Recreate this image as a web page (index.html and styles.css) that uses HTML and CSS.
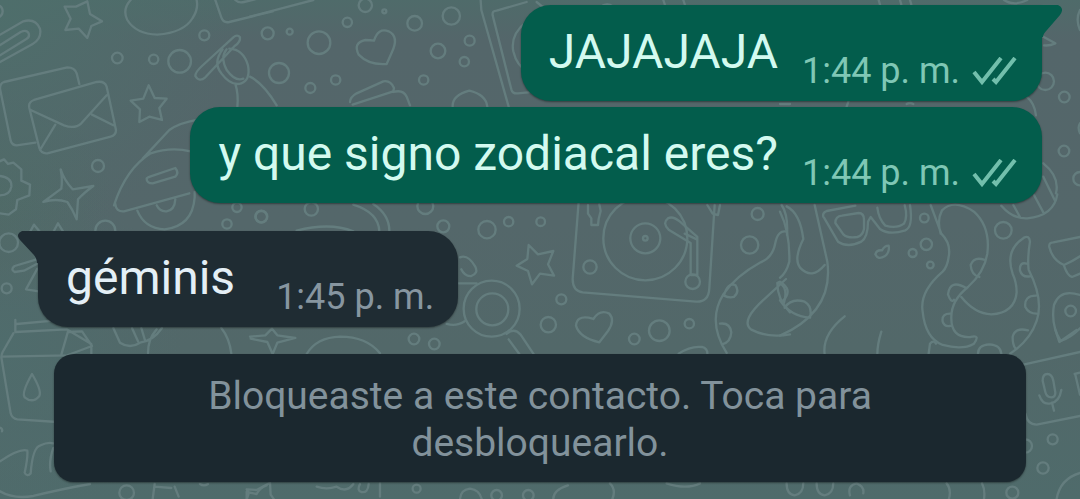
FILE: index.html
```
<!DOCTYPE html>
<html lang="es">
<head>
<meta charset="utf-8">
<meta name="viewport" content="width=device-width, initial-scale=1">
<title>Chat</title>
<link rel="stylesheet" href="styles.css">
</head>
<body>
<svg class="wallpaper" viewBox="0 0 1080 499" preserveAspectRatio="xMidYMid slice" aria-hidden="true">
  <!-- top left: clip, envelopes, stars, gear, rocket -->
  <g transform="scale(.3333)">
    <path d="M0 18a20 20 0 0 1 0 32M-10 110L70 64q36-10 50 22q6 30-22 46L0 186M-10 142L62 96q18-8 24 4q4 12-8 18L0 166"/>
    <path d="M262 4l8 38 36 22-32 14-12 36-26-28-40 4 16-34-18-36 34 0z"/>
    <path d="M392 0q-26 28-10 60q26 42 90 44q80-6 106-50q18-28 12-54M646 0l18 52q6 18 24 14l130-32M706 0q10 10 26 6l80-20"/>
    <circle cx="613" cy="106" r="15"/><circle cx="352" cy="174" r="16"/><circle cx="461" cy="178" r="14"/><circle cx="539" cy="184" r="34"/>
    <path d="M586 228q0-12 20-30L700 112q12-10 20 0q2 14-16 26L616 232q-18 16-30-4zM668 148q-30 40-4 72q30 40 60 30q28-10 20-54q-14-48-56-50M680 148q-20 24 0 62q26 36 50 26M706 252q10 30 6 70"/>
    <path d="M106 428l-56 8q-14 0-18-14L0 266q0-16 12-20l190-44q22 0 28 18l8 32M88 324q-4-18 14-24l188-54q24-4 30 14l28 130q0 16-16 20l-190 50q-18 2-24-16zM92 330l100 46q32 12 52-6l76-84M166 374l-46 76M276 344l64 32"/>
    <path d="M446 256l18 38 36 2-22 28 8 36-38-10-30 16 2-38-28-26 38-6z"/>
    <circle cx="294" cy="498" r="18"/>
    <path d="M182 508q10 32 36 60l62-10q-30 22-46 40l-4 60q-12-30-28-52q-34-12-72 0l54-40q4-26-2-58z"/>
    <path d="M0 640l26 4 22-16 4-28 36-14 2-32-26-12 0-34-24-20-16 4-12-14-22 10"/>
    <path d="M0 528q36 4 34 32q-4 26-34 26"/>
    <path d="M428 476l80-86q30-22 90-32M342 616q36-110 110-156q60-20 120-6M346 612q2 24 26 22l196-54M440 536q0 14 18 14l68-20q12-12 0-26l-76 26q-10 4-10 6M412 632q22 54 82 56q84-10 90-96v-16M470 616q10 20 30 18q24-4 26-36"/>
    <circle cx="784" cy="650" r="18"/><circle cx="681" cy="672" r="14"/><circle cx="711" cy="622" r="14"/><circle cx="316" cy="692" r="30"/>
    <path d="M90 696l12-22 18 22M160 696l14-26 16 26"/>
  </g>
  <!-- top centre: heart and bubbles -->
  <g transform="translate(250 0) scale(.3333)">
    <path d="M0 50L190 0M0 230q40 20 80 86"/>
    <circle cx="346" cy="16" r="20"/><circle cx="403" cy="34" r="6"/><circle cx="292" cy="67" r="14"/><circle cx="53" cy="100" r="18"/><circle cx="119" cy="95" r="9"/><circle cx="207" cy="128" r="34"/><circle cx="87" cy="219" r="30"/><circle cx="181" cy="264" r="15"/><circle cx="257" cy="240" r="14"/><circle cx="494" cy="70" r="22"/><circle cx="604" cy="48" r="26"/><circle cx="659" cy="122" r="15"/><circle cx="564" cy="153" r="22"/><circle cx="643" cy="185" r="14"/><circle cx="521" cy="240" r="14"/>
    <path d="M372 122q12-40 44-28q32 16 10 62l-16 36q-54 4-84-28q-18-36 20-44q16 0 26 2z"/>
    <path d="M300 306q0-14 20-26l80-36q22-4 32 20l-2 10-122 40M430 276q30-8 40 14l10 26M608 320q-2-34 50-48q50 12 54 48M692 0l2 30 82 290M830 6l-90 26q-14 0-12 14l56 222q4 14 20 12l60-6M830 64q-50 40-40 90q10 44 44 62"/>
    <path d="M860 6l20 16M1050 22q20-16 40-2M1240 0l6 18M1300 0l6 18"/>
  </g>
  <!-- right edge -->
  <g transform="translate(780 0) scale(.3333)">
    <path d="M296 0l4 14M360 0l4 14M390 0l4 14M672 0q30 20 70 0M790 110l36 20q-18 8-34 6M900 30q-14 28 0 60"/>
    <circle cx="796" cy="244" r="26"/><circle cx="853" cy="291" r="16"/><circle cx="852" cy="453" r="16"/><circle cx="900" cy="536" r="20"/>
    <path d="M740 290q24 20 28 56M790 490q50 40 38 90M790 530l34 70M900 370q-8 12 0 30M0 312h30M200 320l6-18M380 312q10-6 20 0"/>
  </g>
  <!-- middle strip, left half -->
  <g transform="translate(0 200) scale(.3333)">
    <circle cx="26" cy="128" r="28"/><circle cx="20" cy="265" r="15"/>
    <path d="M110 178L44 198q-14 10 0 18l28-4 38-20M112 206l-34 62 38 6"/>
  </g>
  <g transform="translate(250 200) scale(.3333)">
    <circle cx="34" cy="50" r="17"/><circle cx="184" cy="27" r="20"/><circle cx="526" cy="18" r="24"/><circle cx="580" cy="79" r="18"/><circle cx="711" cy="89" r="26"/><circle cx="776" cy="65" r="14"/><circle cx="725" cy="326" r="84"/><circle cx="727" cy="328" r="48"/><circle cx="492" cy="417" r="16"/><circle cx="553" cy="432" r="16"/>
    <path d="M310 14q76 24 78 80M370 12q50 34 48 84M140 92q100-26 170 2M630 172q24-10 46 28q10 20-12 28q-20 2-30-20M626 250h54M590 372q30 8 54-8M770 402q22-20 42 2l40 60M776 418l32 44"/>
    <path d="M0 410l46-4 20-20 16 20 54 8-54 14-14 34-16-36-50-10M170 462q30-50 100-52q80 0 120 50"/>
  </g>
  <!-- record player, hearts, stars -->
  <g transform="translate(510 195) scale(.3333)">
    <circle cx="92" cy="80" r="13"/><circle cx="240" cy="216" r="20"/><circle cx="154" cy="313" r="15"/><circle cx="115" cy="389" r="23"/><circle cx="448" cy="407" r="31"/><circle cx="373" cy="432" r="16"/><circle cx="538" cy="386" r="14"/><circle cx="743" cy="57" r="18"/><circle cx="719" cy="150" r="26"/>
    <path d="M56 150l28 28 46-10-16 40 18 34-42-6-24 32-12-40-34-16 32-20z"/>
    <path d="M206 20l-18 232q0 36 30 40l340 28q38 2 40-40L614 30M234 30l0 26 10 14 0 20h20l2-18 6-24-4-20M592 30l16 26 16 4 6-30"/>
    <circle cx="406" cy="130" r="126"/><circle cx="406" cy="130" r="45"/><circle cx="406" cy="130" r="7"/><circle cx="548" cy="260" r="22"/>
    <path d="M474 70q14-8 36 10l52 46v114h-20V144l-66-40q-20-20-2-34M524 116l38 18"/>
    <path d="M250 372q20-30 48-16q18 20-4 52l-26 34q-60-14-70-50q2-30 38-24z"/>
    <path d="M506 476q36-24 70-20q18 4 16 24M815 30q20 30 16 90M830 110q-26-6-34 34q-8 44-44 58q-76 42-112 96q-50 80 10 176M642 302q10-40 34-32q14 20-4 36q-14 4-30-4M630 386q30-4 34 26q-2 30-28 36M828 252l-60 56q-80 70-44 96q50 26 116 14M802 264q0 50 38 88M806 262q30 14 16 62"/>
  </g>
  <!-- octopus, glasses, fish -->
  <g transform="translate(780 195) scale(.3333)">
    <path d="M20 34q40 20 50 98q-30 60-10 86q36 38 74-8M104 30q18 80 38 170q20 150-142 222M0 50q30 60 28 150q-10 36-28 48M0 260q40 24 10 56M14 338q20-30 60-18q24 14 16 48q-58-4-90-52"/>
    <path d="M130 66q-4-12 10-18l86-16M132 68l42 72q30 20 70 0q20-14 20-60l8-14 28 36q28 20 76 4q24-10 14-76M166 84q0-20 20-22l50-8q16 0 16 20v28q-4 20-20 24q-30 4-42-8zM292 38q4 34 24 54q34 10 56-6q12-20 2-56"/>
    <path d="M326 152q4 20-12 32q-20 12-28-6q4-14 20-12q8-14 20-14z"/>
    <circle cx="398" cy="174" r="12"/><circle cx="439" cy="148" r="17"/><circle cx="451" cy="210" r="10"/><circle cx="433" cy="69" r="13"/><circle cx="670" cy="106" r="25"/>
    <path d="M452 30l32 86q30 30 22 70q-4 30-18 44q-70 60-60 120q8 80 60 100q60 16 94-4q20-28-10-20q-60 4-58-60q0-50 50-90q50-46 58-100q10-80-40-126q-60-40-96-4q-16 30-4 70M612 194q-30-10-40 16q2 30 26 36M560 280q-50-30-56 18q10 28 18 16M514 356q-30-2-26 24q6 18 26 12"/>
    <path d="M544 306q40 50 90 52q70-4 76-66q0-30-12-56q-24-70 34-108q16-8 18 12q-8 50-4 84q46 90 24 154q-20 60-80 98M740 206q-22-6-20 20q6 22 30 18M768 302q-36 0-32 34q10 20 34 20M744 406q-40-10-46 20q0 24 8 34M594 476q0-26 34-28q34 2 36 28M446 476l4-30q10-12 18 0"/>
    <path d="M134 478q-8-60 60-114M292 478q0-30 12-68M664 32q34 40 78 38q80-8 90-72M700 30l20 36M762 0l30 56M900 126l-80 16q-14 0-12 14q10 40 44 54q24-10 48-26M852 212q10 30 24 34l24-10M900 300q-60-20-78 30q-10 60 20 108q30-10 58-38"/>
    <circle cx="872" cy="348" r="16"/>
  </g>
  <!-- bottom left: milk carton, hand -->
  <g transform="translate(0 320) scale(.3333)">
    <path d="M40 40L8 96q-4 8-4 16l28 168q4 16 20 18l120 8M46 0v36l154-8 74 44v30M204 34l-20 70M6 110l200-4M50 12l110-10M206 36l40-2 30 44-80 30"/>
    <path d="M96 162q30 50 22 66q-20 24-44 4q-10-14 22-70z"/>
    <path d="M0 424q60-40 82-32q2 20-8 66q6 14 18 2q6-80 30-84q20-10 38-6M160 384q-14 40-8 70M0 514q40 24 100 14q80-20 170-36M-10 320q20 4 16 14"/>
    <path d="M340 24l20 44q30 20 60 0q40-6 66-44M396 24l18 40M424 24l12 40M470 28q-26 28-26 72M664 24q24 30 30 76"/>
    <circle cx="380" cy="518" r="22"/>
    <path d="M464 492l-6 46M524 500l12 30M464 500l50 4M600 492q12 8 24 0M740 538v-22l30 6q10-20 30-26"/>
  </g>
  <!-- bottom edge -->
  <g transform="translate(200 480) scale(.3333)">
    <path d="M140 60l6-20-6-12 30 2 40-22 2 36 10 14M350 20q30 10 60 0 30 20 50-8M480 12q-10 20 4 24q20 4 22-24M540 10v40M780 60q0-30 30-34q30 4 36 34M1060 60q-2-30 44-44M1230 10q20 20 6 50M1400 10q60 20 100 0M1760 10q0 34 24 36q26-4 26-36M1850 10q0 34 24 36q26-4 26-36M1950 46q-8-30 20-36q24 10 20 30M2240 10q16 20 6 50"/>
    <circle cx="650" cy="26" r="12"/><circle cx="890" cy="46" r="16"/><circle cx="985" cy="46" r="16"/>
  </g>
  <!-- bottom right: voice card -->
  <g transform="translate(960 330) scale(.3333)">
    <path d="M190 104L360 66M196 250q6 34 34 34l130-26M248 152q0-20 14-20q14 0 18 20l6 36q0 14-12 14q-14 0-18-16zM238 196q10 30 34 24q26-4 32-40M276 218l6 24M344 132l16-4M346 134l14 60M286 0l12 36 52-36M290 507q10-60 70-78M66 460q10 20 6 47"/>
    <circle cx="278" cy="328" r="15"/><circle cx="249" cy="414" r="17"/><circle cx="196" cy="348" r="20"/><circle cx="157" cy="488" r="18"/>
  </g>
</svg>

<main class="chat">
  <div class="message message-out message-first">
    <svg class="tail tail-out" viewBox="0 0 20 32" aria-hidden="true"><path d="M0 0H16Q23 3 18 10L5 25Q1 29 1 32H0Z"/></svg>
    <span class="text">JAJAJAJA</span>
    <span class="meta"><time>1:44 p. m.</time>
      <svg class="ticks" viewBox="0 0 46 28" role="img" aria-label="Entregado"><path d="M2 15L10 25 29 1M21 22L24 25 43 1"/></svg>
    </span>
  </div>
  <div class="message message-out">
    <span class="text">y que signo zodiacal eres?</span>
    <span class="meta"><time>1:44 p. m.</time>
      <svg class="ticks" viewBox="0 0 46 28" role="img" aria-label="Entregado"><path d="M2 15L10 25 29 1M21 22L24 25 43 1"/></svg>
    </span>
  </div>
  <div class="message message-in">
    <svg class="tail tail-in" viewBox="0 0 20 32" aria-hidden="true"><path d="M20 0H4Q-3 3 2 9L15 23Q19 27 19 32H20Z"/></svg>
    <span class="text">géminis</span>
    <span class="meta"><time>1:45 p. m.</time></span>
  </div>
  <button class="notice" type="button">Bloqueaste a este contacto. Toca para desbloquearlo.</button>
</main>
</body>
</html>
```
FILE: styles.css
```
* {
  box-sizing: border-box;
}

body {
  margin: 0;
  min-height: 100vh;
  position: relative;
  overflow-x: hidden;
  font-family: Roboto, "Liberation Sans", sans-serif;
  background:
    radial-gradient(circle at 0 0, #4e6e6b, transparent 20%),
    radial-gradient(circle at 0 40%, #506a67, transparent 10%),
    radial-gradient(circle at 0 70%, #4f6c6c, transparent 16%),
    linear-gradient(#4f6b6a 0, #54666a 8%, #54676a 45%, #526869 70%, #4f6b6b 100%);
}

.wallpaper {
  position: absolute;
  inset: 0;
  width: 100%;
  height: 100%;
  fill: none;
  stroke: #647d7e;
  stroke-width: 7;
  stroke-linecap: round;
  stroke-linejoin: round;
}

.chat {
  position: relative;
  display: flex;
  flex-direction: column;
  padding: 5px 38px 16px;
}

.message {
  position: relative;
  display: flex;
  align-items: flex-end;
  max-width: 90%;
  padding: 19px 24px 10px 28px;
  border-radius: 30px;
  box-shadow: 0 1px 2px #0006;
}

.message-out {
  align-self: flex-end;
  gap: 24px;
  margin-bottom: 28px;
  background: #035d4c;
  color: #d3faf0;
}

.message-first {
  margin-bottom: 6px;
  border-top-right-radius: 0;
}

.message-in {
  align-self: flex-start;
  gap: 41px;
  margin-bottom: 27px;
  border-top-left-radius: 0;
  background: #1f2c33;
  color: #e4eff6;
}

.text {
  margin-bottom: 11px;
  font-size: 48px;
  line-height: 56px;
}

.meta {
  display: flex;
  align-items: center;
  gap: 12px;
  font-size: 36px;
  line-height: 40px;
  white-space: nowrap;
}

.message-out .meta {
  color: #7fc7b5;
}

.message-in .meta {
  color: #8796a0;
}

.ticks {
  width: 46px;
  height: 28px;
  fill: none;
  stroke: #72bfac;
  stroke-width: 4;
}

.tail {
  position: absolute;
  top: 0;
  width: 20px;
  height: 32px;
}

.tail-out {
  left: 100%;
  fill: #035d4c;
}

.tail-in {
  right: 100%;
  fill: #1f2c33;
}

.notice {
  margin: 0 16px;
  padding: 19px 40px 15px;
  border: 0;
  border-radius: 20px;
  background: #1b282f;
  box-shadow: 0 1px 2px #0006;
  color: #82929b;
  font-family: inherit;
  font-size: 39px;
  line-height: 47px;
  text-align: center;
  cursor: pointer;
}
```
